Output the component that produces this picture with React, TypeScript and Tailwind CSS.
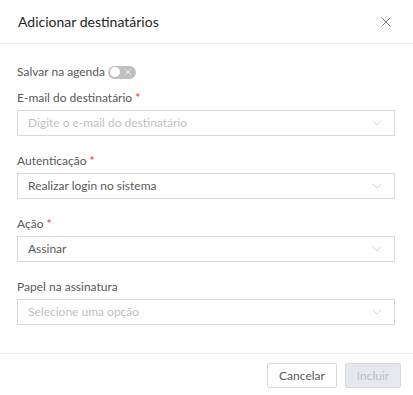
import { X, ChevronDown } from "lucide-react";

type FieldProps = {
  label: string;
  required?: boolean;
  value?: string;
  placeholder?: string;
};

function SelectField({ label, required, value, placeholder }: FieldProps) {
  return (
    <div>
      <div className="flex h-4 items-center text-[12px] text-[#595959]">
        {label}
        {required && <span className="ml-[3px] font-bold text-[#ff4d4f]">*</span>}
      </div>
      <div className="mt-[4px] flex h-[26px] items-center justify-between border border-[#d9d9d9] bg-white pl-[10px] pr-[9px]">
        <span className={`text-[12px] ${value ? "text-[#595959]" : "text-[#bfbfbf]"}`}>
          {value ?? placeholder}
        </span>
        <ChevronDown className="size-[16px] text-[#bfbfbf]" strokeWidth={1} />
      </div>
    </div>
  );
}

export default function App() {
  return (
    <div className="h-[395px] w-[413px] bg-white font-['Lato',sans-serif]">
      <header className="flex h-[44px] items-center justify-between border-b border-[#ececec] pl-[18px] pr-[19px]">
        <h1 className="text-[14px] text-[#262626]">Adicionar destinatários</h1>
        <X className="size-[16px] text-[#595959]" strokeWidth={1.2} />
      </header>

      <div className="h-[310px] border-b border-[#ececec] pl-[17px] pr-[18px] pt-[20px]">
        <div className="flex h-4 items-center gap-[3px] text-[12px] text-[#595959]">
          Salvar na agenda
          <span className="flex h-[13px] w-[28px] items-center justify-between rounded-full bg-[#bfbfbf] px-[2px]">
            <span className="size-[10px] rounded-full bg-white" />
            <X className="mr-[1px] size-[10px] text-white" strokeWidth={2} />
          </span>
        </div>

        <div className="mt-[10px] flex flex-col gap-[17px]">
          <SelectField label="E-mail do destinatário" required placeholder="Digite o e-mail do destinatário" />
          <SelectField label="Autenticação" required value="Realizar login no sistema" />
          <SelectField label="Ação" required value="Assinar" />
          <SelectField label="Papel na assinatura" placeholder="Selecione uma opção" />
        </div>
      </div>

      <footer className="flex justify-end gap-[8px] pr-[12px] pt-[9px]">
        <button className="h-[25px] w-[70px] rounded-[2px] border border-[#d9d9d9] bg-white text-[12px] text-[#595959]">
          Cancelar
        </button>
        <button className="h-[25px] w-[56px] rounded-[2px] border border-[#d9d9d9] bg-[#e6e8ef] text-[12px] text-[#bfbfbf]">
          Incluir
        </button>
      </footer>
    </div>
  );
}
